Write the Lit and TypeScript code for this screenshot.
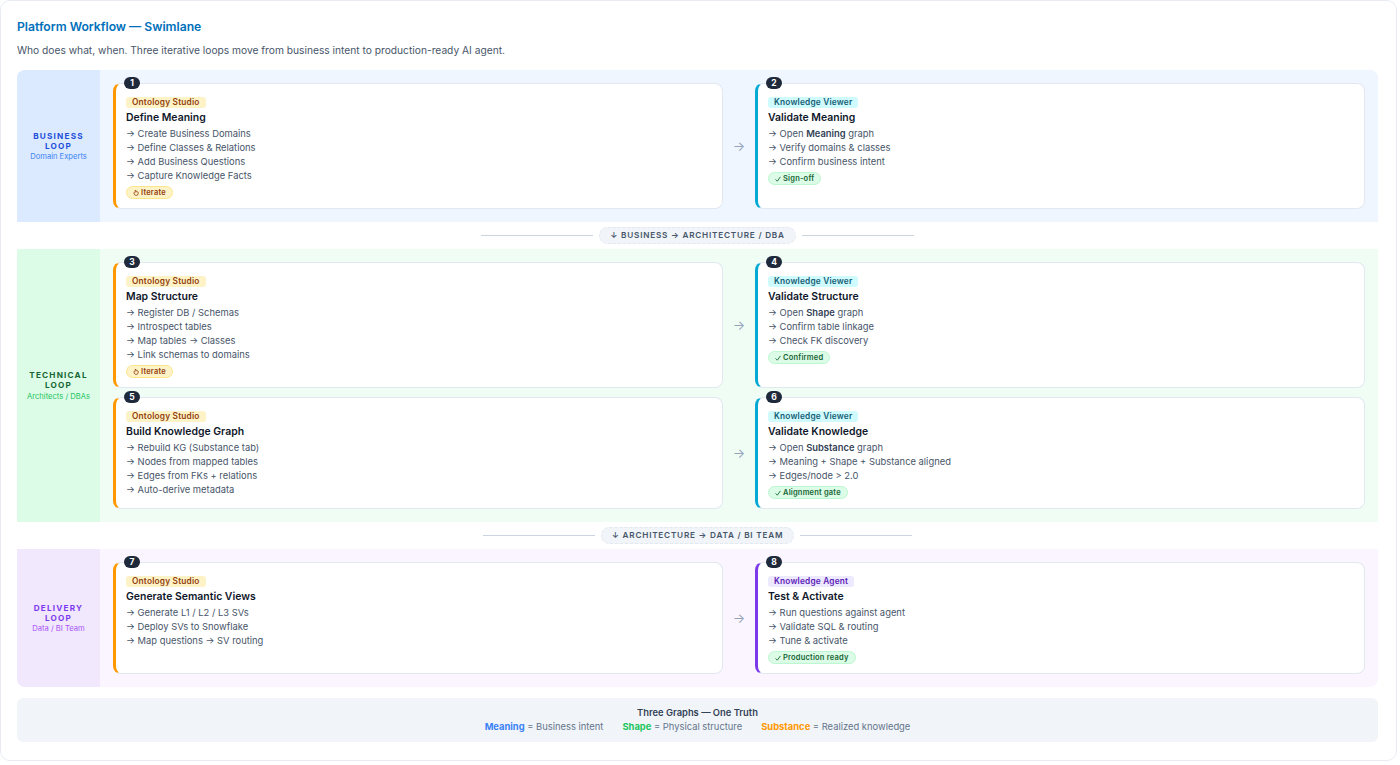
import { LitElement, html, css, svg, TemplateResult } from "lit";
import { customElement } from "lit/decorators.js";

type Kind = "studio" | "viewer" | "agent";

interface Step {
  n: number;
  kind: Kind;
  title: string;
  items: (string | TemplateResult)[];
  pill?: string;
  warn?: boolean;
}

const TAGS: Record<Kind, string> = {
  studio: "Ontology Studio",
  viewer: "Knowledge Viewer",
  agent: "Knowledge Agent",
};

const LANES = [
  {
    cls: "business",
    name: "BUSINESS LOOP",
    who: "Domain Experts",
    rows: [
      [
        {
          n: 1,
          kind: "studio",
          title: "Define Meaning",
          items: ["Create Business Domains", "Define Classes & Relations", "Add Business Questions", "Capture Knowledge Facts"],
          pill: "Iterate",
          warn: true,
        },
        {
          n: 2,
          kind: "viewer",
          title: "Validate Meaning",
          items: [html`Open <b>Meaning</b> graph`, "Verify domains & classes", "Confirm business intent"],
          pill: "Sign-off",
        },
      ],
    ],
  },
  {
    cls: "technical",
    name: "TECHNICAL LOOP",
    who: "Architects / DBAs",
    rows: [
      [
        {
          n: 3,
          kind: "studio",
          title: "Map Structure",
          items: ["Register DB / Schemas", "Introspect tables", "Map tables → Classes", "Link schemas to domains"],
          pill: "Iterate",
          warn: true,
        },
        {
          n: 4,
          kind: "viewer",
          title: "Validate Structure",
          items: [html`Open <b>Shape</b> graph`, "Confirm table linkage", "Check FK discovery"],
          pill: "Confirmed",
        },
      ],
      [
        {
          n: 5,
          kind: "studio",
          title: "Build Knowledge Graph",
          items: ["Rebuild KG (Substance tab)", "Nodes from mapped tables", "Edges from FKs + relations", "Auto-derive metadata"],
        },
        {
          n: 6,
          kind: "viewer",
          title: "Validate Knowledge",
          items: [html`Open <b>Substance</b> graph`, "Meaning + Shape + Substance aligned", "Edges/node > 2.0"],
          pill: "Alignment gate",
        },
      ],
    ],
  },
  {
    cls: "delivery",
    name: "DELIVERY LOOP",
    who: "Data / BI Team",
    rows: [
      [
        {
          n: 7,
          kind: "studio",
          title: "Generate Semantic Views",
          items: ["Generate L1 / L2 / L3 SVs", "Deploy SVs to Snowflake", "Map questions → SV routing"],
        },
        {
          n: 8,
          kind: "agent",
          title: "Test & Activate",
          items: ["Run questions against agent", "Validate SQL & routing", "Tune & activate"],
          pill: "Production ready",
        },
      ],
    ],
  },
] as { cls: string; name: string; who: string; rows: Step[][] }[];

const ICON_CHECK = svg`<path d="M0.6 3.4 L2.3 5.2 L5.4 0.9" />`;
const ICON_ITERATE = svg`<path d="M1.5 2 A2.1 2.1 0 1 0 3 1.2" /><path d="M3.2 0 L1.7 1.2 L3.2 2.4" />`;

@customElement("app-root")
export class AppRoot extends LitElement {
  static styles = css`
    :host {
      display: block;
      width: 1397px;
      font-family: Inter, "DejaVu Sans", sans-serif;
      color: #0f172a;
    }

    .page {
      box-sizing: border-box;
      height: 761px;
      padding: 19px 18px 0 16px;
      background: #fff;
      border: 1px solid #e8ecf2;
      border-radius: 10px;
    }

    h1 {
      margin: 0;
      font-size: 12.15px;
      line-height: 14px;
      font-weight: 600;
      color: #0070bb;
    }

    .intro {
      margin: 9px 0 13px;
      font-size: 10.23px;
      line-height: 14px;
      color: #475569;
    }

    .lane {
      display: grid;
      grid-template-columns: 83px 1fr;
      border-radius: 8px 8px 0 0;
    }

    .lane.technical {
      border-radius: 0;
    }

    .lane.delivery {
      border-radius: 0 0 8px 8px;
    }

    .lane.business {
      background: #eff6ff;
    }

    .lane.technical {
      background: #f0fdf4;
    }

    .lane.delivery {
      background: #faf5ff;
    }

    .label {
      display: flex;
      flex-direction: column;
      align-items: center;
      justify-content: center;
      padding: 1px 16px 0;
      text-align: center;
      border-radius: inherit;
      border-top-right-radius: 0;
      border-bottom-right-radius: 0;
    }

    .name {
      font-size: 8.2px;
      line-height: 10px;
      font-weight: 700;
      letter-spacing: 1.2px;
    }

    .who {
      margin-top: 1.5px;
      font-size: 7.6px;
      line-height: 10px;
      white-space: nowrap;
    }

    .business .label {
      background: #dbeafe;
    }

    .business .name {
      color: #1d4ed8;
    }

    .business .who {
      color: #3b82f6;
    }

    .technical .label {
      background: #dcfce7;
    }

    .technical .name {
      color: #166534;
    }

    .technical .who {
      color: #22c55e;
    }

    .delivery .label {
      background: #f1e8fe;
    }

    .delivery .name {
      color: #7c3aed;
    }

    .delivery .who {
      color: #a855f7;
    }

    .body {
      display: flex;
      flex-direction: column;
      gap: 9px;
      padding: 13px;
    }

    .row {
      display: grid;
      grid-template-columns: 1fr 32px 1fr;
    }

    .arrow {
      display: flex;
      align-items: center;
      justify-content: center;
      font-size: 13px;
      color: #94a3b8;
    }

    .card {
      position: relative;
      box-sizing: border-box;
      min-height: 112px;
      padding: 13px 10px 9px 10px;
      background: #fff;
      border: 1px solid #e2e8f0;
      border-left: 3px solid;
      border-radius: 8px;
    }

    .card.studio {
      border-left-color: #ff9800;
    }

    .card.viewer {
      border-left-color: #06a9d4;
    }

    .card.agent {
      border-left-color: #7c3aed;
    }

    .num {
      position: absolute;
      top: -7px;
      left: 8px;
      min-width: 16px;
      height: 12px;
      border-radius: 6px;
      background: #1e293b;
      color: #fff;
      font-size: 8.5px;
      line-height: 12px;
      font-weight: 700;
      text-align: center;
    }

    .tag {
      width: fit-content;
      padding: 0 6px;
      height: 11px;
      border-radius: 3px;
      font-size: 8.3px;
      line-height: 11px;
      font-weight: 600;
      letter-spacing: 0.2px;
    }

    .tag.studio {
      background: #fef3c7;
      color: #92400e;
    }

    .tag.viewer {
      background: #cffafe;
      color: #155e75;
    }

    .tag.agent {
      background: #ede9fe;
      color: #5b21b6;
    }

    h3 {
      margin: 3px 0 1.5px;
      font-size: 10.45px;
      line-height: 14px;
      font-weight: 600;
      color: #0f172a;
    }

    ul {
      margin: 0;
      padding: 0;
      list-style: none;
    }

    li {
      font-size: 9.4px;
      line-height: 14px;
      color: #475569;
      white-space: nowrap;
    }

    li b {
      font-weight: 600;
      color: #334155;
    }

    .pill {
      display: flex;
      align-items: center;
      gap: 2px;
      box-sizing: border-box;
      width: fit-content;
      margin-top: 3.5px;
      padding: 0 6px;
      height: 13px;
      border: 1px solid;
      border-radius: 7px;
      font-size: 7.5px;
      line-height: 11px;
      font-weight: 600;
      letter-spacing: 0.2px;
    }

    .pill svg {
      width: 6px;
      height: 6px;
      fill: none;
      stroke: currentColor;
      stroke-width: 0.9;
    }

    .pill.warn {
      background: #fef3c7;
      border-color: #fde68a;
      color: #92400e;
    }

    .pill.ok {
      background: #dcfce7;
      border-color: #bbf7d0;
      color: #166534;
    }

    .link {
      display: flex;
      align-items: center;
      justify-content: center;
      gap: 6px;
      height: 27px;
    }

    .line {
      width: 112px;
      height: 1px;
      background: #cbd5e1;
    }

    .link span {
      padding: 0 10px;
      height: 15px;
      border: 1px dashed #e2e8f0;
      border-radius: 9px;
      background: #f1f5f9;
      font-size: 8.2px;
      line-height: 15px;
      font-weight: 600;
      letter-spacing: 0.78px;
      color: #475569;
    }

    .foot {
      margin-top: 11px;
      padding: 8px 0;
      height: 44px;
      box-sizing: border-box;
      border-radius: 6px;
      background: #f1f5f9;
      text-align: center;
      font-size: 9.4px;
      line-height: 14px;
      color: #64748b;
    }

    .foot strong {
      display: block;
      font-weight: 600;
      color: #334155;
    }

    .legend {
      display: flex;
      justify-content: center;
      gap: 19px;
    }

    .legend b {
      font-weight: 700;
    }

    .meaning {
      color: #3b82f6;
    }

    .shape {
      color: #22c55e;
    }

    .substance {
      color: #ff9800;
    }
  `;

  private renderCard(s: Step) {
    return html`
      <div class="card ${s.kind}">
        <div class="num">${s.n}</div>
        <div class="tag ${s.kind}">${TAGS[s.kind]}</div>
        <h3>${s.title}</h3>
        <ul>
          ${s.items.map((i) => html`<li>→ ${i}</li>`)}
        </ul>
        ${s.pill
          ? html`<div class="pill ${s.warn ? "warn" : "ok"}">
              <svg viewBox="0 0 6 6">${s.warn ? ICON_ITERATE : ICON_CHECK}</svg>
              <span>${s.pill}</span>
            </div>`
          : ""}
      </div>
    `;
  }

  private renderLane(l: (typeof LANES)[number]) {
    return html`
      <section class="lane ${l.cls}">
        <div class="label">
          <div class="name">${l.name}</div>
          <div class="who">${l.who}</div>
        </div>
        <div class="body">
          ${l.rows.map(
            (r) => html`
              <div class="row">
                ${this.renderCard(r[0])}
                <div class="arrow">→</div>
                ${this.renderCard(r[1])}
              </div>
            `
          )}
        </div>
      </section>
    `;
  }

  private renderLink(text: string) {
    return html`
      <div class="link">
        <div class="line"></div>
        <span>${text}</span>
        <div class="line"></div>
      </div>
    `;
  }

  render() {
    return html`
      <div class="page">
        <h1>Platform Workflow — Swimlane</h1>
        <p class="intro">
          Who does what, when. Three iterative loops move from business intent
          to production-ready AI agent.
        </p>
        ${this.renderLane(LANES[0])}
        ${this.renderLink("↓ BUSINESS → ARCHITECTURE / DBA")}
        ${this.renderLane(LANES[1])}
        ${this.renderLink("↓ ARCHITECTURE → DATA / BI TEAM")}
        ${this.renderLane(LANES[2])}
        <div class="foot">
          <strong>Three Graphs — One Truth</strong>
          <div class="legend">
            <div><b class="meaning">Meaning</b> = Business intent</div>
            <div><b class="shape">Shape</b> = Physical structure</div>
            <div><b class="substance">Substance</b> = Realized knowledge</div>
          </div>
        </div>
      </div>
    `;
  }
}
